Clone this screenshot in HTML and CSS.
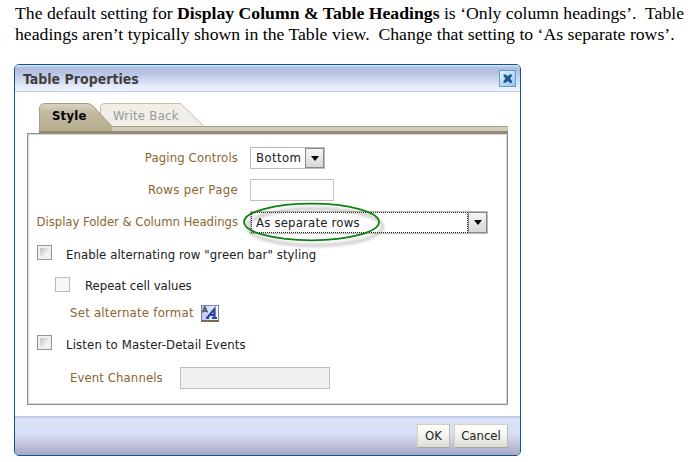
FILE: index.html
```html
<!DOCTYPE html>
<html lang="en">
<head>
<meta charset="utf-8">
<title>Table Properties</title>
<link rel="stylesheet" href="styles.css">
</head>
<body>
<p class="intro"><span class="line line-one">The default setting for <b>Display Column &amp; Table Headings</b> is ‘Only column headings’.&nbsp; Table</span><br><span class="line line-two">headings aren’t typically shown in the Table view.&nbsp; Change that setting to ‘As separate rows’.</span></p>
<section class="dialog">
  <header class="titlebar">
    <h1 class="title">Table Properties</h1>
    <svg class="close" width="17" height="17" viewBox="0 0 17 17"><defs><linearGradient id="cl" x1="0" y1="0" x2="1" y2="1"><stop offset="0" stop-color="#eaf5fc"/><stop offset="1" stop-color="#8fc3e4"/></linearGradient></defs><rect x=".5" y=".5" width="16" height="16" fill="url(#cl)" stroke="#5c9fc9"/><path d="M4.500 4.500h2.500l1.700 2L10.400 4.500h2.500v1.500L11 8.500l2 2.500v1.700h-2.600l-1.700-2L7 12.700H4.500V11l2-2.500-2-2.500z" fill="#1c568f"/></svg>
  </header>
  <div class="content">
    <nav class="tabs">
      <svg class="tab-art" width="469" height="31" viewBox="0 0 469 31">
        <defs>
          <linearGradient id="tb" x1="0" y1="0" x2="0" y2="1"><stop offset="0" stop-color="#d9d5c4"/><stop offset=".3" stop-color="#c2baa2"/><stop offset="1" stop-color="#b5aa8c"/></linearGradient>
        </defs>
        <path d="M61.500 25V5.500q0-4 4.500-4h75.500L165 24.500" fill="#f1eee7" stroke="#c9bda9"/>
        <rect x="70" y="24" width="399" height="6" fill="#d1cdbd"/>
        <path d="M72 24.500h397" stroke="#a79f84"/>
        <path d="M.5 31V5.500L4.500 1.500H49Q52 2 55 5L73 24.500V31z" fill="url(#tb)"/>
        <path d="M.5 31V5.500Q1 1.500 5.500 1.500H49Q52 2 55 5L73 24.500" fill="none" stroke="#a99c80"/>
        <path d="M0 30h469" stroke="#9b8a65" stroke-width="2"/>
      </svg>
      <span class="tab tab-active">Style</span><span class="tab tab-idle">Write Back</span>
    </nav>
    <div class="panel">
      <div class="row"><label class="label l-paging">Paging Controls</label><div class="select select-small"><span class="value v-bottom">Bottom</span><span class="arrow"></span></div></div>
      <div class="row"><label class="label l-rows">Rows per Page</label><div class="field"></div></div>
      <div class="row"><label class="label l-display">Display Folder &amp; Column Headings</label><div class="select select-wide"><span class="value v-rows">As separate rows</span><span class="arrow"></span>
        <svg class="highlight" width="150" height="54" viewBox="0 0 150 54"><ellipse class="shadow" cx="73" cy="27" rx="67.500" ry="18.300"/><ellipse class="ring" cx="69.500" cy="22" rx="67.500" ry="18.300"/></svg></div></div>
      <div class="row check-row"><span class="check"></span><span class="text t-enable">Enable alternating row "green bar" styling</span></div>
      <div class="row repeat-row"><span class="check check-off"></span><span class="text t-repeat">Repeat cell values</span></div>
      <div class="row format-row"><span class="brown t-format">Set alternate format</span>
        <svg class="format-icon" width="18" height="17" viewBox="0 0 18 17"><defs><linearGradient id="fi" x1="0" y1="0" x2="1" y2="0"><stop offset="0" stop-color="#b9c5ee"/><stop offset="1" stop-color="#fff"/></linearGradient></defs><rect x=".5" y=".5" width="17" height="16" fill="url(#fi)" stroke="#7580c4"/><path d="M1.500 7.500L3.800 2l2.700 5.500M2.500 6h3" fill="none" stroke="#505050" stroke-width="1.500"/><path d="M6 13L13.500 4V13M8.500 10h5M5 13h3M11 13h5" fill="none" stroke="#2544a5" stroke-width="2.200"/><path d="M0 16h18" stroke="#806849" stroke-width="2"/></svg></div>
      <div class="row listen-row"><span class="check"></span><span class="text t-listen">Listen to Master-Detail Events</span></div>
      <div class="row event-row"><label class="brown t-event">Event Channels</label><div class="field field-off"></div></div>
    </div>
  </div>
  <footer class="footer"><button class="button ok">OK</button><button class="button cancel">Cancel</button></footer>
</section>
</body>
</html>
```
FILE: styles.css
```css
* { box-sizing: border-box; }
body { margin: 0; width: 695px; height: 462px; overflow: hidden; background: #fff; font: 13px/16px "DejaVu Sans Condensed", "DejaVu Sans", sans-serif; font-stretch: condensed; color: #202020; }
.intro { margin: 0; padding: 3px 0 0 15px; height: 64px; font: 17.710px/21px "Liberation Serif", serif; color: #000; white-space: nowrap; }
.dialog { display: flex; flex-direction: column; width: 507px; height: 392px; margin-left: 14px; border: 1px solid #075b8c; border-radius: 5px; overflow: hidden; background: #fff; }
.titlebar { display: flex; justify-content: space-between; height: 27px; padding: 5px 4px 0 8px; border-bottom: 1px solid #c5cde6; background: linear-gradient(#dce8f5 0, #aebbdd 3px, #bcc6e6 9px, #e8edfb 22px, #edf1ff); }
.title { margin: 1px 0 0; font-size: 14px; line-height: 16px; color: #404040; white-space: nowrap; }
.content { flex: 1; padding: 10px 12px 0; }
.tabs { position: relative; display: flex; height: 31px; margin-left: 12px; padding-top: 6px; }
.tab-art { position: absolute; left: 0; top: 0; }
.tab { position: relative; font-size: 13px; white-space: nowrap; }
.tab-active { width: 61px; padding-left: 13px; font-weight: bold; letter-spacing: .2px; color: #000; }
.tab-idle { padding-left: 13px; letter-spacing: .3px; color: #999; }
.panel { width: 481px; height: 272px; border: 1px solid #8e8e8e; padding-top: 8px; box-shadow: inset -1px -1px #d8d8d8, inset 1px 1px #d8d8d8; }
.row { display: flex; align-items: center; height: 32px; white-space: nowrap; }
.label { width: 210px; margin-right: 12px; display: flex; justify-content: flex-end; color: #8b6530; }
.l-paging { letter-spacing: .13px; }
.l-rows { letter-spacing: .35px; }
.l-display { letter-spacing: -.04px; }
.brown { color: #8b6530; }
.select { position: relative; display: flex; height: 22px; border: 1px solid #bcbcb5; background: #fff; }
.select-small { width: 75px; }
.select-wide { width: 238px; height: 23px; }
.select-wide .value { outline: 1px dotted #222; outline-offset: -1px; }
.value { flex: 1; padding-left: 5px; line-height: 20px; min-width: 0; }
.select-wide .value { line-height: 22px; }
.v-bottom { letter-spacing: .4px; }
.v-rows { letter-spacing: .2px; }
.arrow { display: grid; place-items: center; width: 19px; border: 1px solid #888; background: linear-gradient(#f5f5f5, #d8d8d8); }
.arrow::before { content: ""; border: 4px solid transparent; border-top: 5px solid #000; border-bottom: 0; }
.field { width: 84px; height: 22px; border: 1px solid #c1c1bb; }
.field-off { width: 150px; background: #f0f0f0; }
.highlight { position: absolute; left: -9px; top: -12px; }
.ring { fill: none; stroke: #108010; stroke-width: 1.800; }
.shadow { fill: none; stroke: #777; stroke-opacity: .4; stroke-width: 3; filter: blur(1.500px); }
.check { width: 15px; height: 15px; margin: -4px 14px 0 9px; border: 1px solid #969696; background: linear-gradient(135deg, #b9bfc8, #f5f5f5 75%) 2px 2px / 9px 9px no-repeat #f1f1f1; }
.check-off { margin: -2px 15px 0 27px; border-color: #bcbcbc; background: #f7f7f7; }
.text { padding-top: 2px; }
.t-enable { letter-spacing: .09px; }
.t-listen { letter-spacing: .15px; }
.repeat-row { height: 30px; }
.format-row { height: 26px; padding-left: 42px; }
.t-format { width: 124px; letter-spacing: .25px; }
.format-icon { margin-left: 7px; }
.listen-row { height: 36px; }
.event-row { padding-left: 42px; }
.t-event { width: 110px; letter-spacing: .1px; }
.footer { display: flex; height: 39px; justify-content: flex-end; gap: 4px; padding: 6px 12px 0 0; border-top: 2px solid #c3cce8; background: linear-gradient(#dbe3f8, #d6ddf4 45%, #a9a7c6); }
.button { height: 24px; border: 1px solid #d5d2b5; border-right-color: #bcba9f; border-bottom-color: #aaa890; padding: 0; background: linear-gradient(#fff, #f2f2ed 55%, #dcdcd6); font: inherit; color: #222; }
.ok { width: 33px; }
.cancel { width: 54px; }
```
